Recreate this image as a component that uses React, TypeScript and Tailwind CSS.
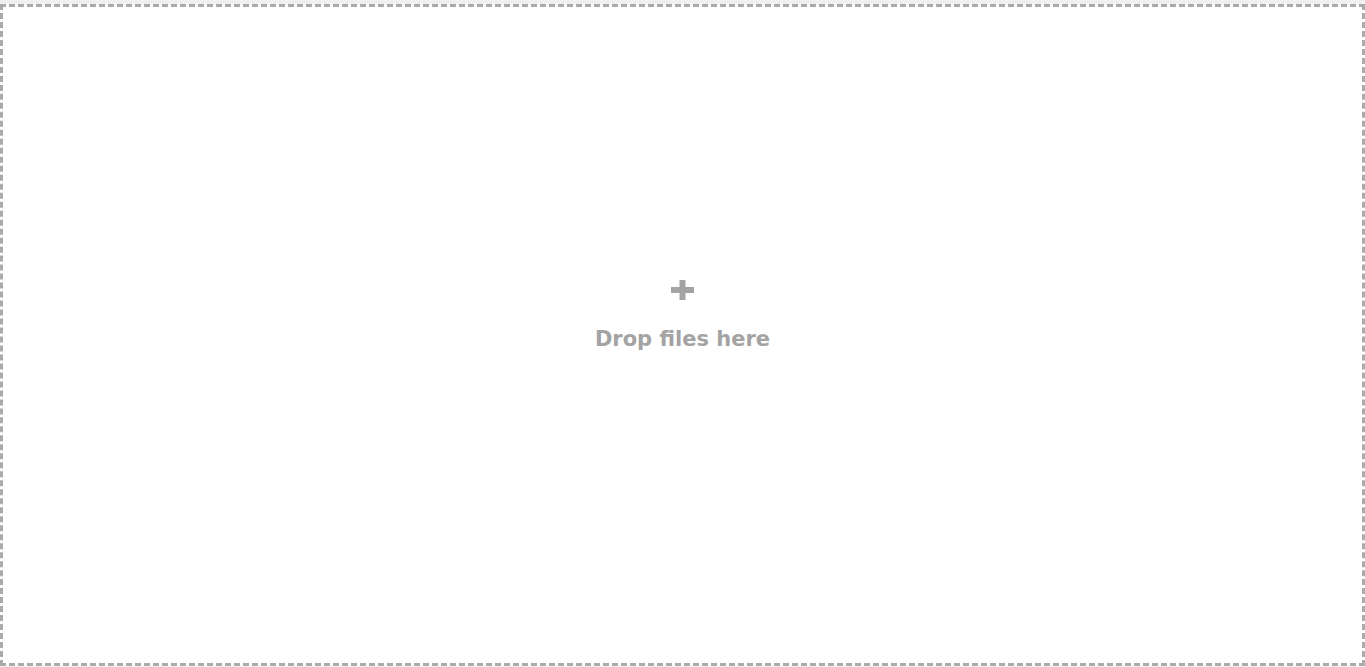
import React from 'react';

export default function App() {
  return (
    <div className="h-screen bg-[#efefef] pt-[4px] font-['DejaVu_Sans',sans-serif]">
      <div className="flex h-[662px] flex-col items-center justify-center border-[3px] border-dashed border-[#aaaaaa] bg-white">
        <div className="mb-[39px] flex flex-col items-center">
          <svg width="23" height="20" viewBox="0 0 23 20">
            <rect x="8.5" y="0" width="6" height="20" fill="#a3a3a3" />
            <rect x="0" y="7" width="23" height="6" fill="#a3a3a3" />
          </svg>
          <div className="mt-[27px] text-[21px] font-bold leading-[24px] text-[#a3a3a3]">Drop files here</div>
        </div>
      </div>
    </div>
  );
}
